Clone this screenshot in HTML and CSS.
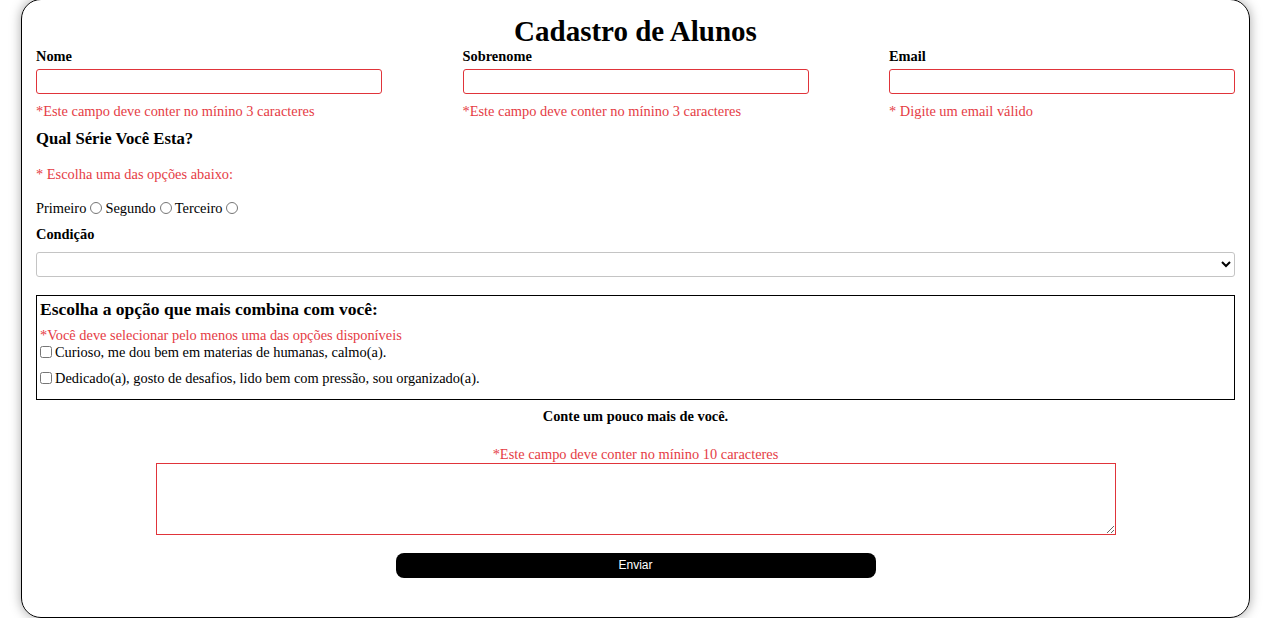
FILE: index.html
```html
<!DOCTYPE html>
<html lang="pt-BR">
<head>
<meta charset="utf-8">
<title>Cadastro de Alunos</title>
<link rel="stylesheet" href="styles.css">
</head>
<body>
<main class="card">
  <h1 class="title">Cadastro de Alunos</h1>
  <div class="row">
    <div class="field">
      <label class="label" for="nome">Nome</label>
      <input class="input" id="nome" type="text">
      <span class="error">*Este campo deve conter no mínino 3 caracteres</span>
    </div>
    <div class="field">
      <label class="label" for="sobrenome">Sobrenome</label>
      <input class="input" id="sobrenome" type="text">
      <span class="error">*Este campo deve conter no mínino 3 caracteres</span>
    </div>
    <div class="field">
      <label class="label" for="email">Email</label>
      <input class="input" id="email" type="text">
      <span class="error">* Digite um email válido</span>
    </div>
  </div>

  <h2 class="subtitle">Qual Série Você Esta?</h2>
  <p class="error block">* Escolha uma das opções abaixo:</p>
  <div class="radios">
    <label>Primeiro <input type="radio" name="serie"></label>
    <label>Segundo <input type="radio" name="serie"></label>
    <label>Terceiro <input type="radio" name="serie"></label>
  </div>

  <label class="label cond" for="cond">Condição</label>
  <select class="select" id="cond"><option></option></select>

  <div class="box">
    <h3 class="box-title">Escolha a opção que mais combina com você:</h3>
    <span class="error">*Você deve selecionar pelo menos uma das opções disponíveis</span>
    <label class="check"><input type="checkbox"> Curioso, me dou bem em materias de humanas, calmo(a).</label>
    <label class="check"><input type="checkbox"> Dedicado(a), gosto de desafios, lido bem com pressão, sou organizado(a).</label>
  </div>

  <div class="about">
    <label class="label" for="sobre">Conte um pouco mais de você.</label>
    <span class="error">*Este campo deve conter no mínino 10 caracteres</span>
    <textarea class="textarea" id="sobre"></textarea>
    <button class="btn" type="button">Enviar</button>
  </div>
</main>
</body>
</html>
```

FILE: styles.css
```css
* { box-sizing: border-box; }
html, body { margin: 0; padding: 0; background: #fff; }
body {
  font-family: "Liberation Serif", "Times New Roman", serif;
  font-size: 14.4px;
  color: #000;
  display: flex;
  justify-content: flex-start;
}
.card {
  width: 1229px;
  height: 619px;
  margin-top: -1px;
  margin-left: 21px;
  border: 1px solid #000;
  border-radius: 20px;
  box-shadow: 0 0 12px rgba(0,0,0,0.35);
  padding: 15px 14px 0 14px;
  display: flex;
  flex-direction: column;
}
.title {
  margin: 0;
  font-size: 29px;
  line-height: 32px;
  text-align: center;
  font-weight: bold;
}
.row {
  display: flex;
  justify-content: space-between;
  margin-top: 1px;
}
.field {
  width: 346px;
  display: flex;
  flex-direction: column;
}
.label {
  font-weight: bold;
  font-size: 14.4px;
  line-height: 16px;
}
.input {
  margin-top: 5px;
  height: 25px;
  border: 1px solid #e0343a;
  border-radius: 3px;
  padding: 0 4px;
  font: inherit;
}
.error {
  color: #e53c45;
  font-size: 14.4px;
  line-height: 16px;
}
.field .error { margin-top: 9px; }
.subtitle {
  margin: 10px 0 0 0;
  font-size: 16.7px;
  line-height: 20px;
  font-weight: bold;
}
.block { margin: 17px 0 0 0; }
.radios {
  margin-top: 18px;
  display: flex;
  line-height: 16px;
}
.radios label { display: inline-flex; align-items: center; margin-right: 3px; }
.radios input {
  margin: 0 0 0 4px;
  width: 12px;
  height: 12px;
}
.cond { margin-top: 10px; }
.select {
  margin-top: 10px;
  height: 25px;
  border: 1px solid #c4c4c4;
  border-radius: 3px;
  background: #fff;
  font: inherit;
}
.box {
  margin-top: 18px;
  border: 1px solid #000;
  height: 105px;
  padding: 3px 3px 0 3px;
  display: flex;
  flex-direction: column;
}
.box-title {
  margin: 0;
  font-size: 17.5px;
  line-height: 20px;
  font-weight: bold;
}
.box .error { margin-top: 8px; }
.check {
  display: flex;
  align-items: center;
  line-height: 16px;
  margin-bottom: 10px;
}
.check input { margin: 0 3px 0 0; width: 12px; height: 12px; }
.box .error + .check { margin-top: 1px; }
.about {
  display: flex;
  flex-direction: column;
  align-items: center;
  margin-top: 8px;
}
.about .error { margin-top: 22px; }
.textarea {
  width: 960px;
  height: 72px;
  margin-top: 1px;
  border: 1px solid #e0343a;
  border-radius: 0;
  resize: vertical;
  font: inherit;
}
.btn {
  margin-top: 18px;
  width: 480px;
  height: 25px;
  padding: 0 0 2px 0;
  background: #000;
  color: #fff;
  border: 0;
  border-radius: 8px;
  font-family: "Liberation Sans", Arial, sans-serif;
  font-size: 12px;
}
```
